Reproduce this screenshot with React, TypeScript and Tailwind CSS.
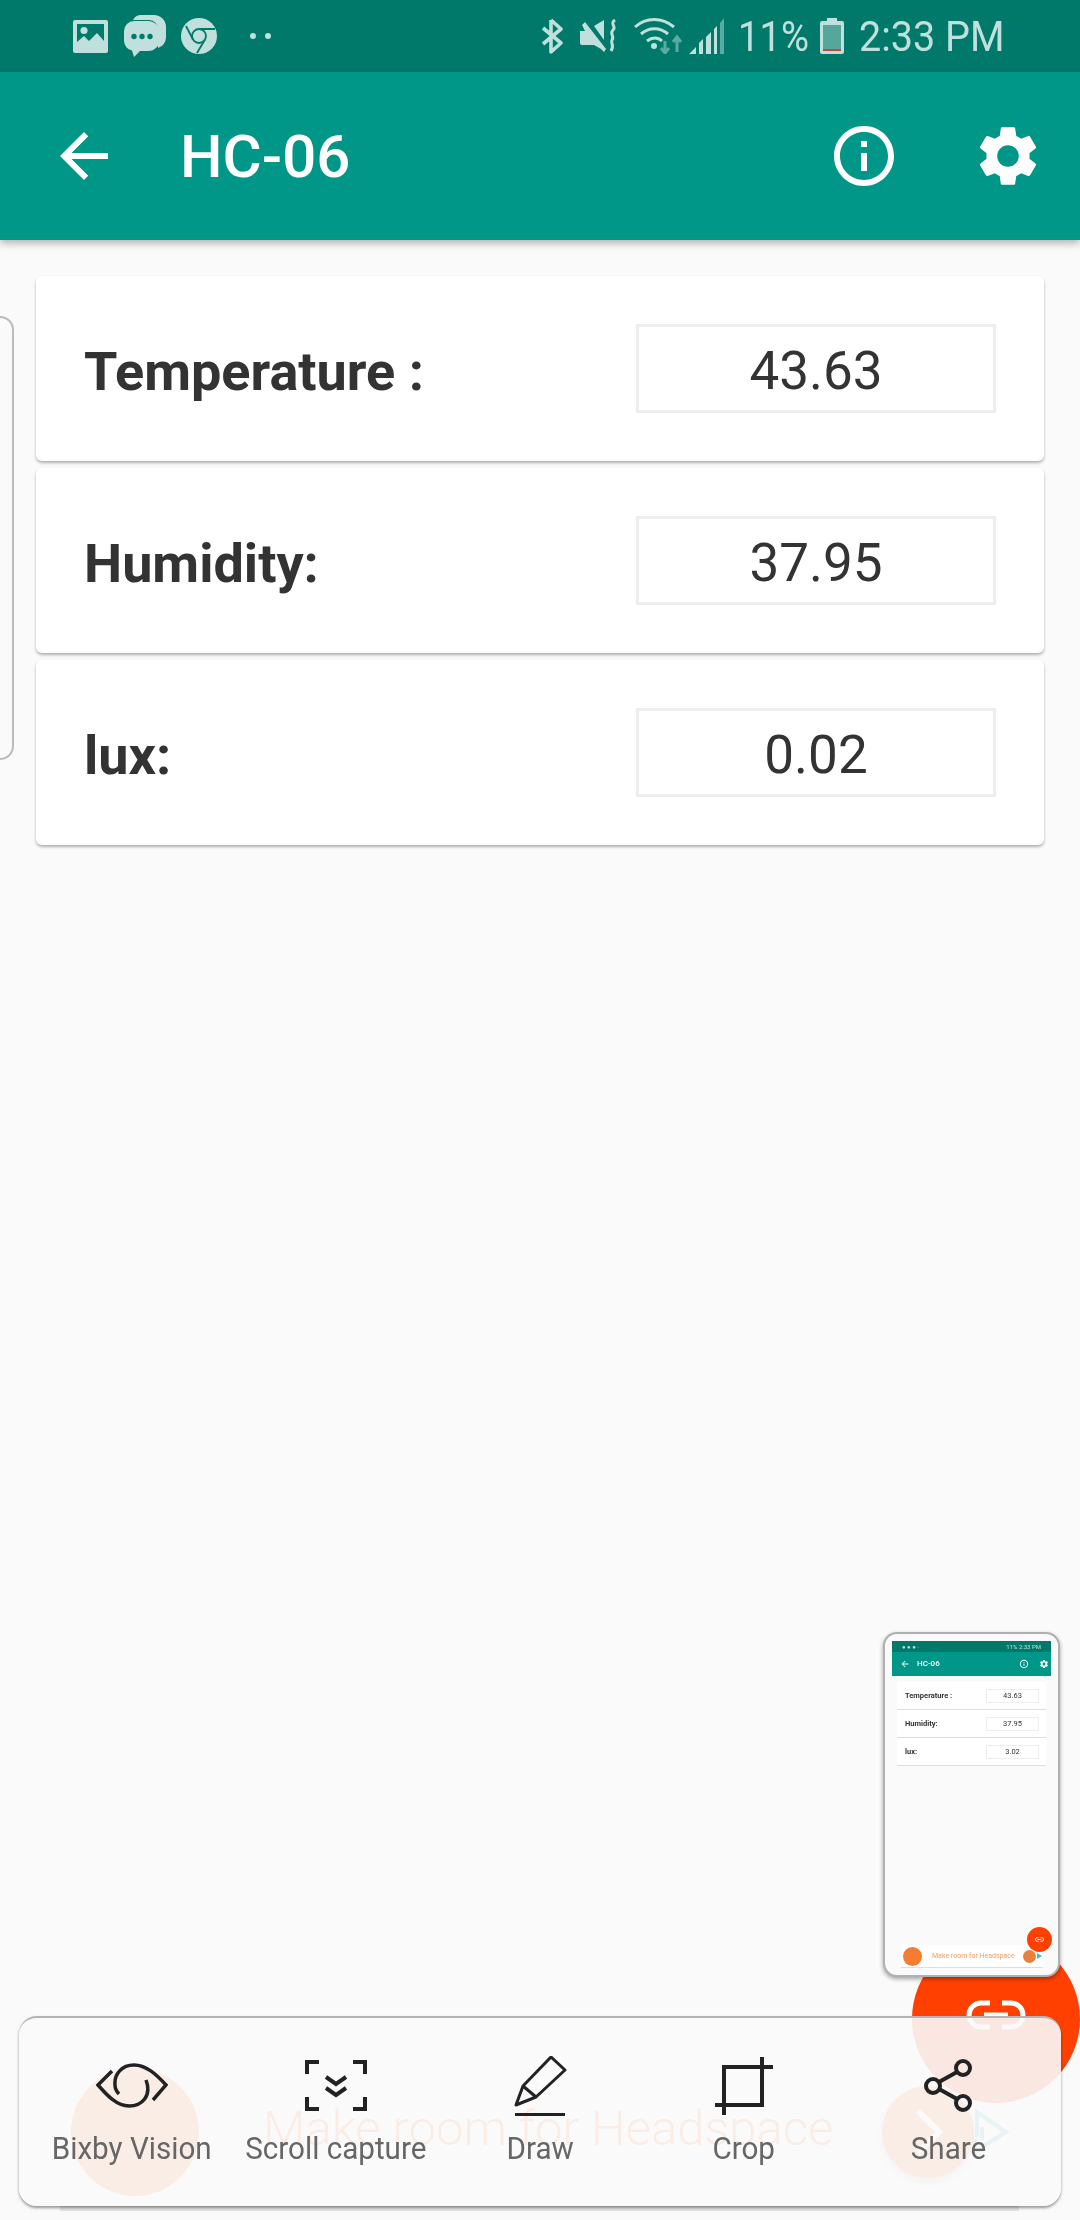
import { MdArrowBack, MdInfoOutline, MdSettings } from "react-icons/md";

const readings = [
  { label: "Temperature :", value: "43.63" },
  { label: "Humidity:", value: "37.95" },
  { label: "lux:", value: "0.02" },
];

const tint = "#bfe0dc";
const bar = "#00796b";

function ImageIcon() {
  return (
    <svg width="35" height="33" viewBox="0 0 35 33" className="shrink-0">
      <path fillRule="evenodd" fill={tint} d="M2 0h31a2 2 0 0 1 2 2v29a2 2 0 0 1-2 2H2a2 2 0 0 1-2-2V2a2 2 0 0 1 2-2zM4 4v18l7-6 5 5 8-8 7 8V4z" />
      <circle cx="11" cy="10.500" r="3.600" fill={tint} />
    </svg>
  );
}

function ChatIcon() {
  return (
    <svg width="42" height="42" viewBox="0 0 42 42" className="shrink-0">
      <path fill={tint} d="M16 0h14a12 12 0 0 1 12 12v10a12 12 0 0 1-8 11V14a9 9 0 0 0-9-9H9a9 9 0 0 1 7-5z" />
      <path fill={tint} d="M10 6h14a12 12 0 0 1 12 12v6a12 12 0 0 1-12 12H16l-6 6-2-6.500A10 10 0 0 1 0 26v-10A10 10 0 0 1 10 6z" />
      <circle cx="10" cy="21.500" r="2.700" fill={bar} />
      <circle cx="18" cy="21.500" r="2.700" fill={bar} />
      <circle cx="26" cy="21.500" r="2.700" fill={bar} />
    </svg>
  );
}

function ChromeIcon() {
  return (
    <svg width="36" height="36" viewBox="0 0 36 36" className="shrink-0">
      <circle cx="18" cy="18" r="18" fill={tint} />
      <circle cx="18" cy="18" r="7" fill="none" stroke={bar} strokeWidth="1.800" />
      <path d="M18 11h16M12 21.500 5 8M24 21.500 16 35" fill="none" stroke={bar} strokeWidth="1.800" />
    </svg>
  );
}

function BluetoothIcon() {
  return (
    <svg width="24" height="38" viewBox="0 0 24 38" className="shrink-0">
      <path d="M11 3v32l10-9L3 11M3 27 21 12 11 3" fill="none" stroke={tint} strokeWidth="3.600" strokeLinejoin="round" />
    </svg>
  );
}

function MuteIcon() {
  return (
    <svg width="39" height="36" viewBox="0 0 39 36" className="shrink-0">
      <path fill={tint} d="M0 13h5l-3-6 3-3 21 27-2 3-3-3-7-4H2a2 2 0 0 1-2-2zM14 8l10-6v20z" />
      <path d="M35 2c-6 4 2 6-2 10-4 4 2 6-1 10-2 3 3 5-1 11" fill="none" stroke={tint} strokeWidth="3" />
    </svg>
  );
}

function WifiIcon() {
  return (
    <svg width="48" height="36" viewBox="0 0 48 36" className="shrink-0">
      <path d="M1 9C12-1 28-1 40 9M7 16c8-7 19-7 27 0M13 23c5-4 11-4 15 0" fill="none" stroke={tint} strokeWidth="3" />
      <circle cx="20" cy="28" r="3" fill={tint} />
      <path d="M31 23v11m-4-4 4 5 4-5M43 34V20m-4 4 4-5 4 5" fill="none" stroke="#5aaba1" strokeWidth="3" />
    </svg>
  );
}

function SignalIcon() {
  return (
    <svg width="35" height="36" viewBox="0 0 35 36" className="shrink-0">
      <path fill={tint} d="M0 36 7 29v7zM10 25l4-4v15h-4zM17 19l5-5v22h-5zM25 11l3-3v28h-3z" />
      <path fill="#5aaba1" d="M31 5l4-5v36h-4z" />
    </svg>
  );
}

function BatteryIcon() {
  return (
    <svg width="24" height="36" viewBox="0 0 24 36" className="shrink-0">
      <path fill={tint} d="M7 0h10v3h5a2 2 0 0 1 2 2v29a2 2 0 0 1-2 2H2a2 2 0 0 1-2-2V5a2 2 0 0 1 2-2h5z" />
      <rect x="3" y="7" width="18" height="26" fill="#55a79c" />
      <rect x="3" y="31" width="18" height="2" fill="#d0403a" />
    </svg>
  );
}

function StatusBar() {
  return (
    <div className="flex h-[72px] shrink-0 items-center bg-[#00796b] pl-[73px] text-[#bfe0dc]">
      <ImageIcon />
      <div className="ml-[16px]">
        <ChatIcon />
      </div>
      <div className="ml-[15px]">
        <ChromeIcon />
      </div>
      <div className="ml-[33px] flex gap-[9px]">
        <span className="size-[6px] rounded-full bg-[#bfe0dc]" />
        <span className="size-[6px] rounded-full bg-[#bfe0dc]" />
      </div>
      <div className="ml-[269px]">
        <BluetoothIcon />
      </div>
      <div className="ml-[16px]">
        <MuteIcon />
      </div>
      <div className="ml-[15px]">
        <WifiIcon />
      </div>
      <div className="ml-[7px]">
        <SignalIcon />
      </div>
      <span className="ml-[14px] w-[70px] origin-left scale-x-[0.89] font-[Roboto,sans-serif] text-[43px] leading-none whitespace-nowrap">
        11%
      </span>
      <div className="ml-[12px]">
        <BatteryIcon />
      </div>
      <span className="ml-[15px] origin-left scale-x-[0.92] font-[Roboto,sans-serif] text-[43px] leading-none whitespace-nowrap">
        2:33 PM
      </span>
    </div>
  );
}

function AppBar() {
  return (
    <header className="relative z-10 flex h-[168px] shrink-0 items-center bg-[#009688] shadow-[0_3px_8px_rgba(0,0,0,0.3)]">
      <MdArrowBack className="ml-[48px] size-[72px] text-white" />
      <h1 className="ml-[60px] pt-[2px] font-[Roboto,sans-serif] text-[60px] leading-none font-medium text-white">HC-06</h1>
      <div className="ml-auto flex gap-[72px] pr-[36px] text-white">
        <MdInfoOutline className="size-[72px]" />
        <MdSettings className="size-[72px]" />
      </div>
    </header>
  );
}

function ReadingCard({ label, value }: { label: string; value: string }) {
  return (
    <div className="flex h-[185px] items-center justify-between rounded-[6px] bg-white px-[48px] shadow-[0_2px_3px_rgba(0,0,0,0.3)]">
      <span className="pt-[5px] font-[Roboto,sans-serif] text-[54px] font-bold text-[#333333]">{label}</span>
      <div className="flex h-[89px] w-[360px] items-center justify-center border-[3px] border-[#eeeeee] pt-[7px] font-[Roboto,sans-serif] text-[53px] text-[#333333]">
        {value}
      </div>
    </div>
  );
}

function AdBanner() {
  return (
    <div className="absolute top-[2057px] left-[60px] flex h-[154px] w-[959px] items-center border-b-[5px] border-[#e4e4e4] bg-white font-[Roboto,sans-serif]">
      <span className="ml-[11px] size-[128px] rounded-full bg-[#f47d32]" />
      <span className="ml-[64px] -translate-y-[3px] text-[49px] font-light whitespace-nowrap text-[#f47d32]">Make room for Headspace</span>
      <span className="absolute left-[822px] flex size-[92px] items-center justify-center rounded-full bg-[#f47d32] shadow-[0_4px_8px_rgba(0,0,0,0.3)]">
        <svg width="30" height="48" viewBox="0 0 30 48">
          <path d="M5 3l21 21L5 45" fill="none" stroke="#ffffff" strokeWidth="6" />
        </svg>
      </span>
      <svg width="36" height="46" viewBox="0 0 36 46" className="absolute left-[913px]">
        <path d="M4 28V3l29 20-22 14" fill="none" stroke="#45b6d6" strokeWidth="4" />
        <path d="M9 18v13M2 30v12l8-1" fill="none" stroke="#45b6d6" strokeWidth="4" />
      </svg>
    </div>
  );
}

function LinkButton() {
  return (
    <div className="absolute top-[1935px] left-[912px] flex size-[168px] items-center justify-center rounded-full bg-[#ff4000]">
      <svg width="60" height="30" viewBox="0 0 60 30" className="-translate-y-[4px]">
        <path d="M24 3H15a12 12 0 0 0 0 24h9M36 3h9a12 12 0 0 1 0 24h-9" fill="none" stroke="#ffffff" strokeWidth="5" />
        <path d="M18 15h24" stroke="#ffffff" strokeWidth="5" />
      </svg>
    </div>
  );
}

function Thumbnail() {
  const rows = [
    { label: "Temperature :", value: "43.63" },
    { label: "Humidity:", value: "37.95" },
    { label: "lux:", value: "3.02" },
  ];
  return (
    <div className="absolute top-[1632px] left-[883px] h-[345px] w-[177px] rounded-[14px] border-2 border-[#b0b0b0] bg-[#fafafa] px-[7px] pt-[7px] font-[Roboto,sans-serif] shadow-[0_2px_4px_rgba(0,0,0,0.35)]">
      <div className="blur-[0.4px]">
        <div className="flex h-[11px] items-center justify-between bg-[#00796b] px-[10px] text-[6px] leading-none text-[#bfe0dc]">
          <span>● ● ● ·</span>
          <span>11% 2:33 PM</span>
        </div>
        <div className="flex h-[24px] items-center bg-[#009688] pl-[8px] text-white">
          <MdArrowBack className="size-[10px]" />
          <span className="ml-[7px] text-[8px] font-medium">HC-06</span>
          <MdInfoOutline className="ml-auto size-[10px]" />
          <MdSettings className="mr-[2px] ml-[10px] size-[10px]" />
        </div>
        <div className="mx-[5px] mt-[6px] flex flex-col">
          {rows.map((row) => (
            <div key={row.label} className="flex h-[28px] items-center justify-between border-b border-[#dddddd] bg-white pr-[7px] pl-[8px] text-[#333333]">
              <span className="text-[7.500px] font-bold">{row.label}</span>
              <span className="flex h-[14px] w-[53px] items-center justify-center border border-[#eeeeee] text-[7.500px]">{row.value}</span>
            </div>
          ))}
        </div>
      </div>
      <div className="absolute top-[311px] left-[16px] flex h-[23px] w-[142px] items-center border-b border-[#dddddd] bg-white blur-[0.3px]">
        <span className="ml-[2px] size-[19px] rounded-full bg-[#f47d32]" />
        <span className="ml-[10px] text-[7px] whitespace-nowrap text-[#f0a060]">Make room for Headspace</span>
        <span className="absolute left-[122px] size-[13px] rounded-full bg-[#e8813c]" />
        <svg width="5" height="6" viewBox="0 0 5 6" className="absolute left-[136px]">
          <path d="M0 0l5 3-5 3z" fill="#45b6d6" />
        </svg>
      </div>
      <div className="absolute top-[293px] left-[142px] flex size-[25px] items-center justify-center rounded-full bg-[#ff4000]">
        <svg width="9" height="5" viewBox="0 0 60 30">
          <path d="M24 3H15a12 12 0 0 0 0 24h9M36 3h9a12 12 0 0 1 0 24h-9M18 15h24" fill="none" stroke="#ffffff" strokeWidth="6" />
        </svg>
      </div>
    </div>
  );
}

function ToolItem({ label, children }: { label: string; children: React.ReactNode }) {
  return (
    <div className="flex flex-col items-center">
      <svg width="72" height="60" viewBox="0 0 72 60" fill="none" stroke="#222222" strokeWidth="3.500">
        {children}
      </svg>
      <span className="mt-[13px] scale-x-[0.955] font-[Roboto,sans-serif] text-[31px] leading-[40px] whitespace-nowrap text-[#666666]">
        {label}
      </span>
    </div>
  );
}

function CaptureToolbar() {
  return (
    <div className="absolute top-[2016px] left-[19px] grid h-[190px] w-[1042px] grid-cols-5 rounded-[18px] border-t-2 border-[#b4b4b4] bg-[#fafafa]/90 px-[11px] pt-[38px] shadow-[0_2px_3px_rgba(0,0,0,0.4)]">
      <ToolItem label="Bixby Vision">
        <path d="M16 15 2 29C10 38 20 50 33 50 46 50 56 40 50 24" />
        <path d="M57 44 70 29C60 18 50 9 38 9 26 9 18 18 19 29 19 33 21 36 23 38" />
      </ToolItem>
      <ToolItem label="Scroll capture">
        <path strokeWidth="4" d="M7 18V6h12M53 6h12v12M7 41v12h12M53 53h12V41" />
        <path strokeWidth="4" d="M26 21l10 7 10-7M26 32l10 7 10-7" />
      </ToolItem>
      <ToolItem label="Draw">
        <path d="M47 1 61 14 32 41 12 49 19 30zM19 30 32 41" strokeWidth="3" strokeLinejoin="round" />
        <path d="M11 59h50" strokeWidth="4" />
      </ToolItem>
      <ToolItem label="Crop">
        <path d="M7 49H54V1M16 59V11H65" strokeWidth="4" />
      </ToolItem>
      <ToolItem label="Share">
        <circle cx="51" cy="12" r="7" strokeWidth="4" />
        <circle cx="51" cy="47" r="7" strokeWidth="4" />
        <circle cx="21" cy="30" r="7" strokeWidth="4" />
        <path d="M27 26l18-10M27 33l18 10" strokeWidth="4" />
      </ToolItem>
    </div>
  );
}

export default function App() {
  return (
    <div className="relative flex h-[2220px] w-[1080px] flex-col overflow-hidden bg-[#fafafa]">
      <StatusBar />
      <AppBar />
      <main className="mx-[36px] mt-[36px] flex flex-col gap-[7px]">
        {readings.map((reading) => (
          <ReadingCard key={reading.label} {...reading} />
        ))}
      </main>
      <div className="absolute top-[316px] left-0 h-[444px] w-[14px] rounded-r-[16px] border-y-2 border-r-2 border-[#bbbbbb]" />
      <AdBanner />
      <LinkButton />
      <CaptureToolbar />
      <Thumbnail />
    </div>
  );
}
